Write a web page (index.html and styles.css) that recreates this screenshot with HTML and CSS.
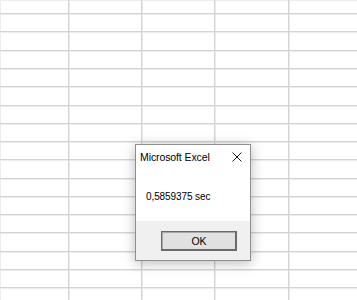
FILE: index.html
```html
<!DOCTYPE html>
<html lang="en">

<head>
    <meta charset="UTF-8">
    <title>Microsoft Excel</title>
    <link rel="stylesheet" href="styles.css">
</head>

<body>
    <div class="sheet">
        <div class="cell"></div><div class="cell"></div><div class="cell"></div><div class="cell"></div><div class="cell"></div>
        <div class="cell"></div><div class="cell"></div><div class="cell"></div><div class="cell"></div><div class="cell"></div>
        <div class="cell"></div><div class="cell"></div><div class="cell"></div><div class="cell"></div><div class="cell"></div>
        <div class="cell"></div><div class="cell"></div><div class="cell"></div><div class="cell"></div><div class="cell"></div>
        <div class="cell"></div><div class="cell"></div><div class="cell"></div><div class="cell"></div><div class="cell"></div>
        <div class="cell"></div><div class="cell"></div><div class="cell"></div><div class="cell"></div><div class="cell"></div>
        <div class="cell"></div><div class="cell"></div><div class="cell"></div><div class="cell"></div><div class="cell"></div>
        <div class="cell"></div><div class="cell"></div><div class="cell"></div><div class="cell"></div><div class="cell"></div>
        <div class="cell"></div><div class="cell"></div><div class="cell"></div><div class="cell"></div><div class="cell"></div>
        <div class="cell"></div><div class="cell"></div><div class="cell"></div><div class="cell"></div><div class="cell"></div>
        <div class="cell"></div><div class="cell"></div><div class="cell"></div><div class="cell"></div><div class="cell"></div>
        <div class="cell"></div><div class="cell"></div><div class="cell"></div><div class="cell"></div><div class="cell"></div>
        <div class="cell"></div><div class="cell"></div><div class="cell"></div><div class="cell"></div><div class="cell"></div>
        <div class="cell"></div><div class="cell"></div><div class="cell"></div><div class="cell"></div><div class="cell"></div>
        <div class="cell"></div><div class="cell"></div><div class="cell"></div><div class="cell"></div><div class="cell"></div>
        <div class="cell"></div><div class="cell"></div><div class="cell"></div><div class="cell"></div><div class="cell"></div>
        <div class="cell"></div><div class="cell"></div><div class="cell"></div><div class="cell"></div><div class="cell"></div>
    </div>

    <div class="dialog">
        <div class="title-bar">
            <span class="title">Microsoft Excel</span>
            <svg class="close" width="10" height="10" viewBox="0 0 10 10">
                <path d="M0.5 0.5 L9.5 9.5 M9.5 0.5 L0.5 9.5" stroke="#1a1a1a" stroke-width="1" fill="none" />
            </svg>
        </div>
        <div class="message">0,5859375 sec</div>
        <div class="footer">
            <button class="btn-ok">OK</button>
        </div>
    </div>
</body>

</html>
```

FILE: styles.css
```css
* {
    box-sizing: border-box;
}

body {
    margin: 0;
    padding: 0;
    width: 357px;
    height: 300px;
    overflow: hidden;
    background: #ffffff;
    font-family: 'Liberation Sans', Arial, sans-serif;
}

.sheet {
    display: grid;
    grid-template-columns: 68px 72px 72px 73px 1fr;
    grid-template-rows: 13px 17px 18px 17px 17px 18px 17px 17px 17px 18px 17px 17px 17px 18px 17px 17px 1fr;
    gap: 1px;
    width: 357px;
    height: 300px;
    background: #d4d4d4;
}

.cell {
    background: #ffffff;
    box-shadow: inset 1px 1px 0 #ececec;
}

.dialog {
    position: absolute;
    left: 135px;
    top: 144px;
    width: 116px;
    height: 117px;
    display: flex;
    flex-direction: column;
    background: #ffffff;
    border: 1px solid #8e8e8e;
    box-shadow: 0 2px 12px rgba(0, 0, 0, 0.28);
}

.title-bar {
    height: 23px;
    display: flex;
    align-items: center;
    justify-content: space-between;
    padding: 0 8px 0 4px;
}

.title {
    font-size: 10.5px;
    letter-spacing: -0.1px;
    color: #000000;
}

.close {
    display: block;
}

.message {
    height: 53px;
    padding: 22px 0 0 10px;
    font-size: 10px;
    line-height: 14px;
    letter-spacing: -0.1px;
    color: #000000;
}

.footer {
    flex: 1;
    display: flex;
    justify-content: flex-end;
    align-items: flex-start;
    padding: 10px 13px 0 0;
    background: #f0f0f0;
}

.btn-ok {
    width: 76px;
    height: 20px;
    padding: 0;
    font-family: 'Liberation Sans', Arial, sans-serif;
    font-size: 10.5px;
    color: #000000;
    background: #e1e1e1;
    border: 1px solid #6a6a6a;
    box-shadow: inset -1px -1px 0 #6a6a6a, inset 1px 1px 0 #a8a8a8;
}
```
